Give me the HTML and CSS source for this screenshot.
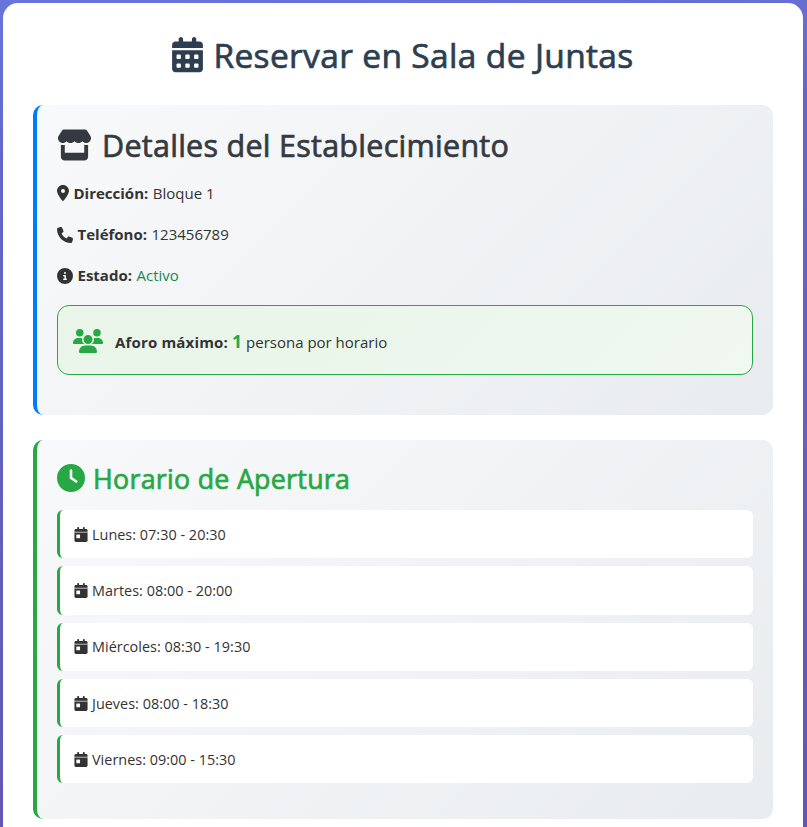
FILE: index.html
```html
<!DOCTYPE html>
<html lang="es">
<head>
<meta charset="utf-8">
<title>Reservar en Sala de Juntas</title>
<link rel="stylesheet" href="styles.css">
</head>
<body>
<svg class="sprite" aria-hidden="true">
  <symbol id="calendar-day" viewBox="0 0 448 512"><path d="M128 0c17.7 0 32 14.3 32 32V64H288V32c0-17.7 14.3-32 32-32s32 14.3 32 32V64h48c26.5 0 48 21.5 48 48v48H0V112C0 85.500 21.500 64 48 64H96V32c0-17.700 14.300-32 32-32zM0 192H448V464c0 26.500-21.500 48-48 48H48c-26.500 0-48-21.500-48-48V192zm80 64c-8.800 0-16 7.200-16 16v96c0 8.800 7.200 16 16 16h96c8.800 0 16-7.200 16-16V272c0-8.800-7.200-16-16-16H80z"/><path opacity=".6" d="M0 160H448V192H0z"/></symbol>
</svg>
<main class="container">
  <h1 class="title">
    <svg class="icon icon-calendar" viewBox="0 0 448 512"><path d="M128 0c17.7 0 32 14.3 32 32V64H288V32c0-17.7 14.3-32 32-32s32 14.3 32 32V64h48c26.5 0 48 21.5 48 48v48H0V112C0 85.5 21.5 64 48 64H96V32c0-17.7 14.3-32 32-32zM0 192H448V464c0 26.5-21.5 48-48 48H48c-26.5 0-48-21.5-48-48V192zm64 80v32c0 8.800 7.200 16 16 16h32c8.800 0 16-7.200 16-16V272c0-8.800-7.200-16-16-16H80c-8.800 0-16 7.200-16 16zm128 0v32c0 8.800 7.200 16 16 16h32c8.800 0 16-7.200 16-16V272c0-8.800-7.200-16-16-16H208c-8.800 0-16 7.200-16 16zm144-16c-8.800 0-16 7.200-16 16v32c0 8.800 7.200 16 16 16h32c8.800 0 16-7.200 16-16V272c0-8.800-7.200-16-16-16H336zM64 400v32c0 8.800 7.200 16 16 16h32c8.800 0 16-7.200 16-16V400c0-8.800-7.200-16-16-16H80c-8.800 0-16 7.200-16 16zm144-16c-8.800 0-16 7.200-16 16v32c0 8.800 7.200 16 16 16h32c8.800 0 16-7.200 16-16V400c0-8.800-7.200-16-16-16H208zm112 16v32c0 8.800 7.200 16 16 16h32c8.800 0 16-7.200 16-16V400c0-8.800-7.200-16-16-16H336c-8.800 0-16 7.200-16 16z"/></svg>
    <span>Reservar en Sala de Juntas</span>
  </h1>

  <section class="card details">
    <h2 class="details-title">
      <svg class="icon icon-store" viewBox="0 0 576 512"><path d="M547.6 103.8L490.3 13.1C485.2 5 476.1 0 466.4 0H109.6C99.900 0 90.800 5 85.700 13.100L28.300 103.800c-29.600 46.800-3.400 111.900 51.900 119.400c4 .5 8.100 .8 12.100 .8c26.100 0 49.300-11.400 65.200-29c15.900 17.600 39.100 29 65.200 29c26.100 0 49.300-11.400 65.200-29c15.900 17.600 39.100 29 65.200 29c26.200 0 49.300-11.400 65.200-29c16 17.600 39.100 29 65.200 29c4.100 0 8.100-.3 12.100-.8c55.500-7.400 81.800-72.500 52.100-119.400zM499.700 254.900l-.1 0c-5.300 .7-10.700 1.100-16.200 1.100c-12.400 0-24.300-1.900-35.400-5.300V384H128V250.600c-11.200 3.500-23.200 5.400-35.600 5.400c-5.500 0-11-.4-16.300-1.100l-.1 0c-4.100-.6-8.100-1.300-12-2.300V448c0 35.300 28.700 64 64 64H448c35.300 0 64-28.700 64-64V252.600c-4 1-8 1.800-12.300 2.300z"/></svg>
      <span>Detalles del Establecimiento</span>
    </h2>
    <p class="info"><svg class="icon icon-pin" viewBox="0 0 384 512"><path d="M215.7 499.200C267 435 384 279.400 384 192C384 86 298 0 192 0S0 86 0 192c0 87.400 117 243 168.300 307.200c12.300 15.300 35.100 15.300 47.400 0zM192 128a64 64 0 1 1 0 128 64 64 0 1 1 0-128z"/></svg><strong>Dirección:</strong><span>Bloque 1</span></p>
    <p class="info"><svg class="icon" viewBox="0 0 512 512"><path d="M164.900 24.600c-7.700-18.600-28-28.500-47.400-23.200l-88 24C12.100 30.200 0 46 0 64C0 311.400 200.600 512 448 512c18 0 33.800-12.100 38.600-29.500l24-88c5.300-19.400-4.600-39.700-23.200-47.400l-96-40c-16.300-6.800-35.200-2.100-46.300 11.600L304.700 368C234.300 334.700 177.300 277.700 144 207.300L193.300 167c13.700-11.200 18.400-30 11.600-46.300l-40-96z"/></svg><strong>Teléfono:</strong><span>123456789</span></p>
    <p class="info"><svg class="icon" viewBox="0 0 512 512"><path d="M256 512A256 256 0 1 0 256 0a256 256 0 1 0 0 512zM216 336h24V272H216c-13.300 0-24-10.700-24-24s10.700-24 24-24h48c13.300 0 24 10.700 24 24v88h8c13.300 0 24 10.700 24 24s-10.700 24-24 24H216c-13.300 0-24-10.700-24-24s10.700-24 24-24zm40-208a32 32 0 1 1 0 64 32 32 0 1 1 0-64z"/></svg><strong>Estado:</strong><span class="active">Activo</span></p>
    <div class="capacity">
      <svg class="icon icon-users" viewBox="0 0 640 512"><path d="M144 0a80 80 0 1 1 0 160A80 80 0 1 1 144 0zM512 0a80 80 0 1 1 0 160A80 80 0 1 1 512 0zM0 298.700C0 239.800 47.800 192 106.700 192h42.700c15.900 0 31 3.500 44.600 9.700c-1.300 7.200-1.900 14.700-1.900 22.300c0 38.200 16.800 72.500 43.300 96c-.2 0-.4 0-.7 0H21.300C9.600 320 0 310.400 0 298.700zM405.300 320c-.2 0-.4 0-.7 0c26.600-23.500 43.300-57.800 43.300-96c0-7.600-.7-15-1.900-22.300c13.600-6.300 28.700-9.700 44.600-9.700h42.700C592.200 192 640 239.800 640 298.700c0 11.800-9.600 21.300-21.300 21.300H405.300zM224 224a96 96 0 1 1 192 0 96 96 0 1 1-192 0zM128 485.300C128 411.700 187.700 352 261.300 352H378.700C452.300 352 512 411.700 512 485.300c0 14.700-11.900 26.700-26.700 26.700H154.700c-14.700 0-26.700-11.900-26.700-26.700z"/></svg>
      <p class="capacity-text"><strong>Aforo máximo:</strong><b class="count">1</b><span>persona por horario</span></p>
    </div>
  </section>

  <section class="card schedule">
    <h3 class="schedule-title">
      <svg class="icon icon-clock" viewBox="0 0 512 512"><path d="M256 0a256 256 0 1 1 0 512A256 256 0 1 1 256 0zM232 120V256c0 8 4 15.500 10.700 20l96 64c11 7.400 25.900 4.400 33.300-6.700s4.400-25.900-6.700-33.300L280 243.200V120c0-13.300-10.700-24-24-24s-24 10.700-24 24z"/></svg>
      <span>Horario de Apertura</span>
    </h3>
    <ul class="days">
      <li><svg class="icon"><use href="#calendar-day"/></svg><span>Lunes: 07:30 - 20:30</span></li>
      <li><svg class="icon"><use href="#calendar-day"/></svg><span>Martes: 08:00 - 20:00</span></li>
      <li><svg class="icon"><use href="#calendar-day"/></svg><span>Miércoles: 08:30 - 19:30</span></li>
      <li><svg class="icon"><use href="#calendar-day"/></svg><span>Jueves: 08:00 - 18:30</span></li>
      <li><svg class="icon"><use href="#calendar-day"/></svg><span>Viernes: 09:00 - 15:30</span></li>
    </ul>
  </section>
</main>
</body>
</html>
```

FILE: styles.css
```css
* { box-sizing: border-box; }
body {
  height: 827px;
  margin: 0;
  padding: 3px 4px 0 3px;
  background: linear-gradient(175deg, #6874dc 0%, #6467c9 18%, #6156b3 100%);
  font-family: "Segoe UI", "Open Sans", "Noto Sans", sans-serif;
  font-size: 15px;
  color: #333;
}
h1, h2, h3, p, ul { margin: 0; padding: 0; }
h1 span, h2 span, h3 span { -webkit-text-stroke: 0.7px currentColor; }
.sprite { display: none; }
.icon { display: block; flex: none; width: 16px; height: 16px; fill: currentColor; }

.container {
  height: 824px;
  padding: 30px 30px 0;
  background: #fff;
  border-radius: 15px 15px 0 0;
}
.title {
  display: flex;
  align-items: center;
  justify-content: center;
  gap: 10px;
  height: 45px;
  margin-bottom: 27px;
  font-size: 33.5px;
  font-weight: 500;
  line-height: 45px;
  letter-spacing: 0.35px;
  color: #2c3e50;
  white-space: nowrap;
}
.icon-calendar { width: 31px; height: 35.2px; margin-top: -1px; }

.card {
  padding: 20px;
  border-left: 4px solid;
  border-radius: 10px;
  background: linear-gradient(135deg, #f8f9fa, #e9ecef);
}
.details { height: 310px; margin-bottom: 25px; border-left-color: #007bff; }
.details-title {
  display: flex;
  align-items: center;
  gap: 10px;
  height: 40px;
  margin-bottom: 15.5px;
  font-size: 30.5px;
  font-weight: 500;
  line-height: 40px;
  letter-spacing: 0.27px;
  color: #343a40;
  white-space: nowrap;
}
.icon-store { width: 35px; height: 32px; }
.info {
  display: flex;
  align-items: center;
  gap: 4.5px;
  height: 25.6px;
  margin-bottom: 15.8px;
  line-height: 25.6px;
  white-space: nowrap;
}
.info strong, .capacity strong { font-weight: 700; }
.icon-pin { width: 12px; }
.active { color: #198754; }
.capacity {
  display: flex;
  align-items: center;
  gap: 12px;
  height: 70px;
  padding: 2px 15px 0;
  border: 1px solid #28a745;
  border-radius: 12px;
  background: linear-gradient(135deg, #e8f5e8, #f0f8f0);
}
.icon-users { width: 30px; height: 24px; fill: #28a745; }
.capacity-text { display: flex; align-items: baseline; gap: 4px; white-space: nowrap; }
.capacity strong { letter-spacing: 0.17px; }
.count { color: #28a745; font-size: 17.6px; }

.schedule { height: 379px; border-left-color: #28a745; }
.schedule-title {
  display: flex;
  align-items: center;
  gap: 8px;
  height: 35px;
  margin-bottom: 15px;
  font-size: 26.8px;
  font-weight: 500;
  line-height: 35px;
  letter-spacing: 0.27px;
  color: #28a745;
  white-space: nowrap;
}
.schedule-title span { padding-top: 1px; }
.icon-clock { width: 28px; height: 28px; }
.days { display: grid; gap: 8px; list-style: none; }
.days li {
  display: flex;
  align-items: center;
  gap: 4px;
  height: 48.3px;
  padding: 0 14px;
  border-left: 3px solid #28a745;
  border-radius: 6px;
  background: #fff;
  font-size: 14.4px;
  letter-spacing: 0.03px;
  white-space: nowrap;
}
.days .icon { width: 14px; height: 15px; }
```
